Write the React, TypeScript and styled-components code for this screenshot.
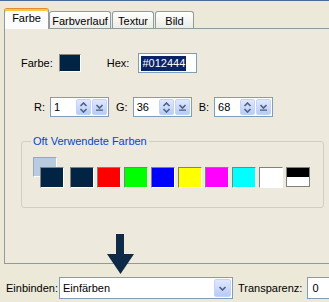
import React from "react";
import styled, { createGlobalStyle } from "styled-components";

const GlobalStyle = createGlobalStyle`
  html, body {
    margin: 0;
    padding: 0;
    background: #ece9d8;
  }
  body {
    font-family: "Liberation Sans", Arial, sans-serif;
    font-size: 11px;
    color: #000;
  }
`;

const SWATCHES = ["#012444", "#ff0000", "#00ff00", "#0000ff", "#ffff00", "#ff00ff", "#00ffff", "#ffffff"];

const Chevron = ({ up, bar }: { up?: boolean; bar?: boolean }) => (
  <svg width="9" height={bar ? 7 : 5} viewBox={bar ? "0 0 9 7" : "0 0 9 5"}>
    <path
      d={up ? "M1.5 4 L4.5 1 L7.5 4" : "M1.5 1 L4.5 4 L7.5 1"}
      fill="none"
      stroke="#4d6185"
      strokeWidth="1.6"
    />
    {bar && <rect x="1" y="5.5" width="7" height="1.3" fill="#4d6185" />}
  </svg>
);

const SpinField = ({ label, value }: { label: string; value: string }) => (
  <SpinGroup>
    <SpinLabel>{label}</SpinLabel>
    <SpinBox>
      <span>{value}</span>
      <SpinButtons>
        <XpButton $w={15} $h={16}>
          <Chevron up />
          <Chevron />
        </XpButton>
        <XpButton $w={15} $h={16}>
          <Chevron bar />
        </XpButton>
      </SpinButtons>
    </SpinBox>
  </SpinGroup>
);

const App = () => {
  return (
    <>
      <GlobalStyle />
      <Frame>
        <TabStrip>
          <Tab $active $w={45}>Farbe</Tab>
          <Tab $w={62}>Farbverlauf</Tab>
          <Tab $w={42}>Textur</Tab>
          <Tab $w={39}>Bild</Tab>
        </TabStrip>

        <Panel>
          <Row>
            <Label>Farbe:</Label>
            <ColorPreview />
            <Label $ml={26}>Hex:</Label>
            <HexInput>
              <Selected>#012444</Selected>
            </HexInput>
          </Row>

          <SpinRow>
            <SpinField label="R:" value="1" />
            <SpinField label="G:" value="36" />
            <SpinField label="B:" value="68" />
          </SpinRow>

          <Group>
            <Legend>Oft Verwendete Farben</Legend>
            <SwatchRow>
              <Swatch $color="#012444" $current />
              {SWATCHES.map((c, i) => (
                <Swatch key={i} $color={c} />
              ))}
              <SplitSwatch />
            </SwatchRow>
          </Group>
        </Panel>

        <BottomRow>
          <BottomLabel $w={48}>Einbinden:</BottomLabel>
          <Select>
            <span>Einfärben</span>
            <XpButton $w={17} $h={18}>
              <Chevron />
            </XpButton>
          </Select>
          <BottomLabel $ml={5}>Transparenz:</BottomLabel>
          <SmallInput>0</SmallInput>
        </BottomRow>

        <Arrow width="27" height="41" viewBox="0 0 27 41">
          <rect x="9" y="0" width="8" height="21" fill="#0f2a47" />
          <polygon points="0,20 27,20 13.5,40" fill="#0f2a47" />
        </Arrow>
      </Frame>
    </>
  );
};

const Frame = styled.div`
  position: relative;
  width: 329px;
  height: 302px;
  overflow: hidden;
  box-sizing: border-box;
  border-top: 1px solid #4a6898;
  background: #ece9d8;
`;

const TabStrip = styled.div`
  display: flex;
  align-items: flex-end;
  gap: 1px;
  height: 27px;
  padding-left: 4px;
`;

const Tab = styled.div<{ $active?: boolean; $w: number }>`
  position: relative;
  z-index: ${(p) => (p.$active ? 2 : 0)};
  flex-shrink: 0;
  box-sizing: border-box;
  width: ${(p) => p.$w}px;
  height: ${(p) => (p.$active ? 21 : 17)}px;
  margin-bottom: ${(p) => (p.$active ? -1 : 0)}px;
  margin-right: ${(p) => (p.$active ? -1 : 0)}px;
  display: flex;
  align-items: center;
  justify-content: center;
  padding-bottom: ${(p) => (p.$active ? 2 : 0)}px;
  padding-top: ${(p) => (p.$active ? 0 : 1)}px;
  border: 1px solid #919b9c;
  border-bottom: none;
  border-top-color: ${(p) => (p.$active ? "#e68b2c" : "#919b9c")};
  border-radius: 3px 3px 0 0;
  background: ${(p) => (p.$active ? "#fcfcfe" : "linear-gradient(#ffffff, #ecebe5)")};
  box-shadow: ${(p) => (p.$active ? "inset 0 2px 0 #ffc73c" : "none")};
  white-space: nowrap;
`;

const Panel = styled.div`
  box-sizing: border-box;
  width: 340px;
  height: 236px;
  margin-left: 4px;
  padding: 24px 0 0 16px;
  border: 1px solid #919b9c;
  background: #ede9dc;
  display: flex;
  flex-direction: column;
`;

const Row = styled.div`
  display: flex;
  align-items: center;
  height: 20px;
`;

const Label = styled.span<{ $ml?: number }>`
  margin-left: ${(p) => p.$ml ?? 0}px;
  white-space: nowrap;
`;

const ColorPreview = styled.div`
  box-sizing: border-box;
  width: 22px;
  height: 18px;
  margin-left: 6px;
  background: #012444;
  border: 1px solid #ffffff;
  border-top-color: #8a8a80;
  border-left-color: #8a8a80;
`;

const HexInput = styled.div`
  box-sizing: border-box;
  width: 59px;
  height: 20px;
  margin-left: 9px;
  padding-left: 2px;
  display: flex;
  align-items: center;
  border: 1px solid #7f9db9;
  background: #fff;
`;

const Selected = styled.span`
  background: #0a246a;
  color: #fff;
  padding: 0 1px;
  line-height: 15px;
`;

const SpinRow = styled.div`
  display: flex;
  align-items: center;
  gap: 7px;
  margin-top: 24px;
  padding-left: 13px;
`;

const SpinGroup = styled.div`
  display: flex;
  align-items: center;
`;

const SpinLabel = styled.span`
  margin-right: 5px;
`;

const SpinBox = styled.div`
  box-sizing: border-box;
  width: 59px;
  height: 20px;
  padding-left: 3px;
  display: flex;
  align-items: center;
  border: 1px solid #7f9db9;
  background: #fff;
`;

const SpinButtons = styled.div`
  display: flex;
  gap: 1px;
  margin-left: auto;
  padding-right: 1px;
`;

const XpButton = styled.div<{ $w: number; $h: number }>`
  box-sizing: border-box;
  flex-shrink: 0;
  width: ${(p) => p.$w}px;
  height: ${(p) => p.$h}px;
  display: flex;
  flex-direction: column;
  align-items: center;
  justify-content: center;
  gap: 1px;
  border: 1px solid #c3d3fd;
  border-radius: 2px;
  background: linear-gradient(#e0e8fd, #b9cbf5);
`;

const Group = styled.fieldset`
  box-sizing: border-box;
  width: 303px;
  margin: 18px 0 0 0;
  padding: 0 0 19px 9px;
  border: 1px solid #d0d0bf;
  border-radius: 3px;
  min-width: 0;
`;

const Legend = styled.legend`
  padding: 0 2px;
  color: #0046d5;
  line-height: 13px;
`;

const SwatchRow = styled.div`
  position: relative;
  z-index: 0;
  display: flex;
  gap: 3px;
  margin: 19px 0 0 9px;
`;

const Swatch = styled.div<{ $color: string; $current?: boolean }>`
  position: relative;
  box-sizing: border-box;
  width: 24px;
  height: 21px;
  margin-right: ${(p) => (p.$current ? 3 : 0)}px;
  background: ${(p) => p.$color};
  border: 1px solid #ffffff;
  border-top-color: #808080;
  border-left-color: #808080;

  ${(p) =>
    p.$current &&
    `
    &::before {
      content: "";
      position: absolute;
      left: -8px;
      top: -11px;
      width: 22px;
      height: 18px;
      background: #b9cbe0;
      border: 1px solid #ffffff;
      border-top-color: #9aa8b8;
      border-left-color: #9aa8b8;
      z-index: -1;
    }
  `}
`;

const SplitSwatch = styled.div`
  box-sizing: border-box;
  width: 24px;
  height: 20px;
  border: 1px solid #808080;
  background: linear-gradient(#000 0, #000 50%, #fff 50%, #fff 100%);
`;

const BottomRow = styled.div`
  display: flex;
  align-items: center;
  height: 22px;
  margin-top: 13px;
  padding-left: 6px;
`;

const BottomLabel = styled.span<{ $ml?: number; $w?: number }>`
  flex-shrink: 0;
  width: ${(p) => (p.$w ? `${p.$w}px` : "auto")};
  margin-left: ${(p) => p.$ml ?? 0}px;
  margin-right: 5px;
  white-space: nowrap;
`;

const Select = styled.div`
  box-sizing: border-box;
  flex-shrink: 0;
  width: 174px;
  height: 22px;
  padding: 0 1px 0 3px;
  display: flex;
  align-items: center;
  justify-content: space-between;
  border: 1px solid #7f9db9;
  background: #fff;
`;

const SmallInput = styled.div`
  box-sizing: border-box;
  flex-shrink: 0;
  width: 40px;
  height: 22px;
  padding-left: 4px;
  display: flex;
  align-items: center;
  border: 1px solid #7f9db9;
  background: #fff;
`;

const Arrow = styled.svg`
  position: absolute;
  left: 107px;
  top: 233px;
`;

export default App;
